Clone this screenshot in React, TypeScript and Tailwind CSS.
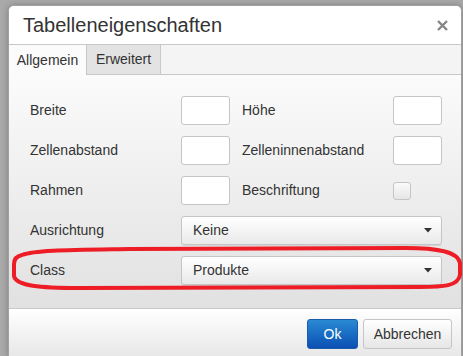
import React from "react";

const font = { fontFamily: '"Liberation Sans", Arial, sans-serif' };

function TextBox() {
  return (
    <div className="h-[29px] w-[49px] rounded-[3px] border border-[#c5c5c5] bg-white" />
  );
}

function Select({ value }: { value: string }) {
  return (
    <div className="flex h-[29px] w-[261px] items-center justify-between rounded-[3px] border border-[#c5c5c5] bg-gradient-to-b from-white to-[#e9e9e9] pl-[11px] pr-[9px] text-[14px] text-[#333] shadow-[0_1px_0_rgba(0,0,0,0.08)]">
      <span>{value}</span>
      <svg width="8" height="5" viewBox="0 0 8 5">
        <path d="M0 0 L8 0 L4 4.5 Z" fill="#333" />
      </svg>
    </div>
  );
}

function Label({ children }: { children: React.ReactNode }) {
  return <div className="w-[151px] text-[14px] text-[#333]">{children}</div>;
}

export default function App() {
  return (
    <div className="h-[356px] w-full overflow-hidden bg-[#a9a9a9] pl-[8px] pt-[5px]" style={font}>
      <div className="relative flex h-[355px] w-[454px] flex-col overflow-hidden rounded-[6px] border border-[#a0a0a0] bg-white shadow-[0_0_6px_rgba(0,0,0,0.25)]">
        {/* header */}
        <div className="flex h-[39px] shrink-0 items-center justify-between border-b border-[#c8c8c8] bg-white pl-[14px] pr-[13px]">
          <span className="text-[20px] leading-none text-[#333]">Tabelleneigenschaften</span>
          <svg width="11" height="11" viewBox="0 0 11 11">
            <path d="M1 1 L10 10 M10 1 L1 10" stroke="#858585" strokeWidth="2.4" />
          </svg>
        </div>

        {/* tabs */}
        <div className="flex h-[30px] shrink-0 bg-[#f4f4f4]">
          <div className="flex w-[78px] items-center justify-center border-r border-[#c8c8c8] bg-[#fbfbfb] text-[14px] text-[#333]">
            Allgemein
          </div>
          <div className="flex w-[74px] items-center justify-center border-r border-b border-[#c8c8c8] bg-[#e3e3e3] text-[14px] text-[#333]">
            Erweitert
          </div>
          <div className="flex-1 border-b border-[#c8c8c8]" />
        </div>

        {/* body */}
        <div className="flex flex-1 flex-col gap-[11px] bg-gradient-to-b from-[#fbfbfb] to-[#e1e1e1] pl-[21px] pt-[21px]">
          <div className="flex h-[29px] items-center">
            <Label>Breite</Label>
            <TextBox />
            <div className="ml-[12px]">
              <Label>Höhe</Label>
            </div>
            <TextBox />
          </div>
          <div className="flex h-[29px] items-center">
            <Label>Zellenabstand</Label>
            <TextBox />
            <div className="ml-[12px]">
              <Label>Zelleninnenabstand</Label>
            </div>
            <TextBox />
          </div>
          <div className="flex h-[29px] items-center">
            <Label>Rahmen</Label>
            <TextBox />
            <div className="ml-[12px]">
              <Label>Beschriftung</Label>
            </div>
            <div className="h-[18px] w-[18px] rounded-[3px] border border-[#c5c5c5] bg-gradient-to-b from-[#fafafa] to-[#e6e6e6]" />
          </div>
          <div className="flex h-[29px] items-center">
            <Label>Ausrichtung</Label>
            <Select value="Keine" />
          </div>
          <div className="flex h-[29px] items-center">
            <Label>Class</Label>
            <Select value="Produkte" />
          </div>
        </div>

        {/* footer */}
        <div className="flex h-[51px] shrink-0 items-start justify-end gap-[5px] border-t border-[#c8c8c8] bg-gradient-to-b from-white to-[#e6e6e6] pr-[9px] pt-[10px]">
          <button className="h-[30px] w-[51px] rounded-[3px] border border-[#1a5ca8] bg-gradient-to-b from-[#2a8ad4] to-[#0d4fb3] text-[14px] text-white">
            Ok
          </button>
          <button className="h-[30px] w-[89px] rounded-[3px] border border-[#c5c5c5] bg-gradient-to-b from-white to-[#e6e6e6] text-[14px] text-[#333]">
            Abbrechen
          </button>
        </div>
      </div>

      {/* red annotation ring */}
      <svg className="pointer-events-none absolute left-0 top-0" width="463" height="356" viewBox="0 0 463 356">
        <path
          d="M22 255 C35 250 70 250 130 249 L405 248 C440 248 458 252 460 263 L460 275 C458 286 444 287 420 287 L80 288 C40 288 16 286 14 276 L14 264 C14 259 17 256 22 255 Z"
          fill="none"
          stroke="#ee1c25"
          strokeWidth="4"
        />
      </svg>
    </div>
  );
}
